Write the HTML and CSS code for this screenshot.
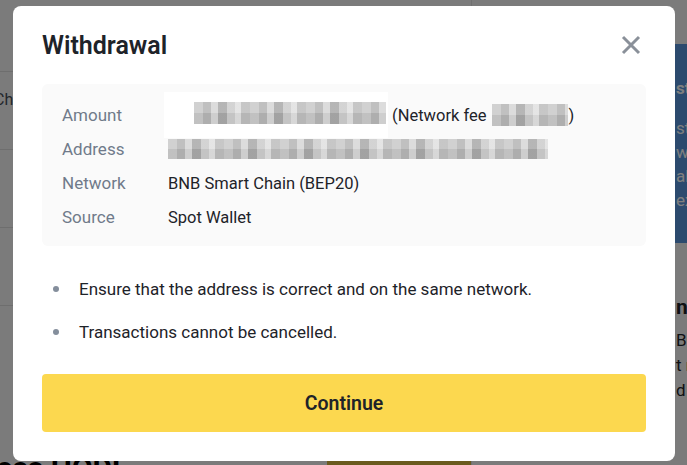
FILE: index.html
```html
<!DOCTYPE html>
<html lang="en">
<head>
<meta charset="utf-8">
<title>Withdrawal</title>
<link rel="stylesheet" href="styles.css">
</head>
<body>
<div class="page">
  <div class="left-col">
    <div class="topbar"></div>
    <div class="row-line"><span class="row-text">Chain</span></div>
    <div class="row-line"></div>
    <div class="row-line"></div>
    <div class="left-bottom">
      <div class="hodl">Less HODL</div>
      <div class="olive"></div>
    </div>
  </div>
  <div class="right-col">
    <div class="blue-panel">
      <div class="bp-title">st</div>
      <div class="bp-line">ste</div>
      <div class="bp-line">w</div>
      <div class="bp-line">al</div>
      <div class="bp-line">ex</div>
    </div>
    <div class="info-side">
      <div class="is-title">n</div>
      <div class="is-line">Bi</div>
      <div class="is-line">t n</div>
      <div class="is-line">d</div>
    </div>
  </div>
</div>
<div class="overlay">
  <div class="modal">
    <div class="modal-head">
      <h1 class="modal-title">Withdrawal</h1>
      <svg class="close" width="24" height="24" viewBox="0 0 24 24" aria-label="Close">
        <path d="M4 4 L20 20 M20 4 L4 20" stroke="#8a9099" stroke-width="3" fill="none"/>
      </svg>
    </div>
    <div class="details">
      <div class="drow">
        <span class="dlabel">Amount</span>
        <span class="dvalue">
          <span class="pix-wrap"><span class="pix pix-amount"></span></span>
          <span class="fee">(Network fee</span>
          <span class="pix pix-fee"></span>
          <span>)</span>
        </span>
      </div>
      <div class="drow">
        <span class="dlabel">Address</span>
        <span class="dvalue"><span class="pix pix-address"></span></span>
      </div>
      <div class="drow">
        <span class="dlabel">Network</span>
        <span class="dvalue">BNB Smart Chain (BEP20)</span>
      </div>
      <div class="drow">
        <span class="dlabel">Source</span>
        <span class="dvalue">Spot Wallet</span>
      </div>
    </div>
    <ul class="notes">
      <li>Ensure that the address is correct and on the same network.</li>
      <li>Transactions cannot be cancelled.</li>
    </ul>
    <button class="continue">Continue</button>
  </div>
</div>
</body>
</html>
```

FILE: styles.css
```css
* { box-sizing: border-box; }
html, body {
  margin: 0;
  padding: 0;
  width: 687px;
  height: 465px;
  overflow: hidden;
  font-family: Roboto, "Liberation Sans", Arial, sans-serif;
}
body { background: #f7f7f7; }

/* underlying page */
.page {
  display: flex;
  width: 687px;
  height: 465px;
  background: #f7f7f7;
}
.left-col {
  flex: 0 0 472px;
  min-width: 0;
  display: flex;
  flex-direction: column;
  border-right: 1px solid #e0e0e0;
}
.topbar { height: 72px; border-bottom: 1px solid #dcdcdc; }
.row-line {
  height: 78px;
  border-bottom: 1px solid #dcdcdc;
  padding-top: 18px;
}
.row-text { display: block; font-size: 16px; line-height: 20px; color: #474d57; margin-left: -6px; }
.left-bottom {
  margin-top: auto;
  height: 8px;
  display: flex;
  align-items: flex-end;
}
.hodl {
  font-size: 30px;
  font-weight: 700;
  color: #000;
  line-height: 22px;
  height: 8px;
  margin-left: -20px;
  white-space: nowrap;
}
.olive {
  margin-left: auto;
  width: 144px;
  height: 4px;
  background: #d6b43c;
}
.right-col {
  flex: 0 0 215px;
  min-width: 0;
  overflow: hidden;
  display: flex;
  flex-direction: column;
  padding-top: 44px;
}
.blue-panel {
  height: 199px;
  background: #5894dc;
  padding: 32px 0 0 204px;
  color: #fff;
  white-space: nowrap;
}
.bp-title { font-size: 17px; line-height: 24px; font-weight: 700; margin-bottom: 16px; }
.bp-line { font-size: 17px; line-height: 24px; }
.info-side {
  padding: 50px 0 0 204px;
  white-space: nowrap;
  color: #1e2329;
}
.is-title { font-size: 21px; line-height: 28px; font-weight: 700; margin-bottom: 7px; }
.is-line { font-size: 17px; line-height: 25px; }

/* overlay + modal */
.overlay {
  position: fixed;
  inset: 0;
  background: rgba(0, 0, 0, 0.5);
}
.modal {
  position: absolute;
  top: 6px;
  left: 13px;
  width: 662px;
  height: 455px;
  background: #fff;
  border-radius: 8px;
  padding: 24px 29px 29px;
  display: flex;
  flex-direction: column;
}
.modal-head {
  display: flex;
  justify-content: space-between;
  align-items: center;
  height: 30px;
}
.modal-title {
  margin: 0;
  font-size: 25px;
  font-weight: 600;
  color: #1e2329;
  line-height: 30px;
  padding-top: 2px;
}
.close { margin-right: 3px; }

.details {
  margin-top: 24px;
  background: #fafafa;
  border-radius: 6px;
  padding: 14px 20px 12px;
}
.drow {
  display: flex;
  align-items: center;
  height: 34px;
  font-size: 16.5px;
}
.dlabel { width: 106px; color: #707a8a; font-size: 17px; }
.dvalue { color: #1e2329; display: flex; align-items: center; }
.pix-wrap {
  background: #fff;
  padding: 10px 2px 10px 30px;
  margin-left: -4px;
}
.pix {
  display: inline-block;
  height: 22px;
  background-color: #cfcfcf;
  background-image:
    linear-gradient(180deg, rgba(255,255,255,0.15) 0 50%, rgba(0,0,0,0.04) 50% 100%),
    repeating-linear-gradient(90deg, #c9c9c9 0 9px, #b5b5b5 9px 17px, #d6d6d6 17px 24px, #a9a9a9 24px 33px, #cccccc 33px 41px, #e0e0e0 41px 47px, #bdbdbd 47px 56px);
}
.pix-amount { width: 192px; }
.pix-fee { width: 76px; margin-left: 6px; }
.pix-address { width: 380px; height: 20px; }
.fee { margin-left: 4px; }

.notes {
  list-style: none;
  margin: 31px 0 0;
  padding: 0;
  display: flex;
  flex-direction: column;
  gap: 19px;
}
.notes li {
  position: relative;
  padding-left: 37px;
  font-size: 17px;
  line-height: 24px;
  color: #1e2329;
}
.notes li::before {
  content: "";
  position: absolute;
  left: 11px;
  top: 9px;
  width: 6px;
  height: 6px;
  border-radius: 50%;
  background: #848e9c;
}
.continue {
  margin-top: 30px;
  height: 58px;
  width: 100%;
  border: none;
  border-radius: 4px;
  background: #fcd84f;
  color: #1e2329;
  font-family: Roboto, "Liberation Sans", Arial, sans-serif;
  font-size: 19.5px;
  font-weight: 600;
}
```
